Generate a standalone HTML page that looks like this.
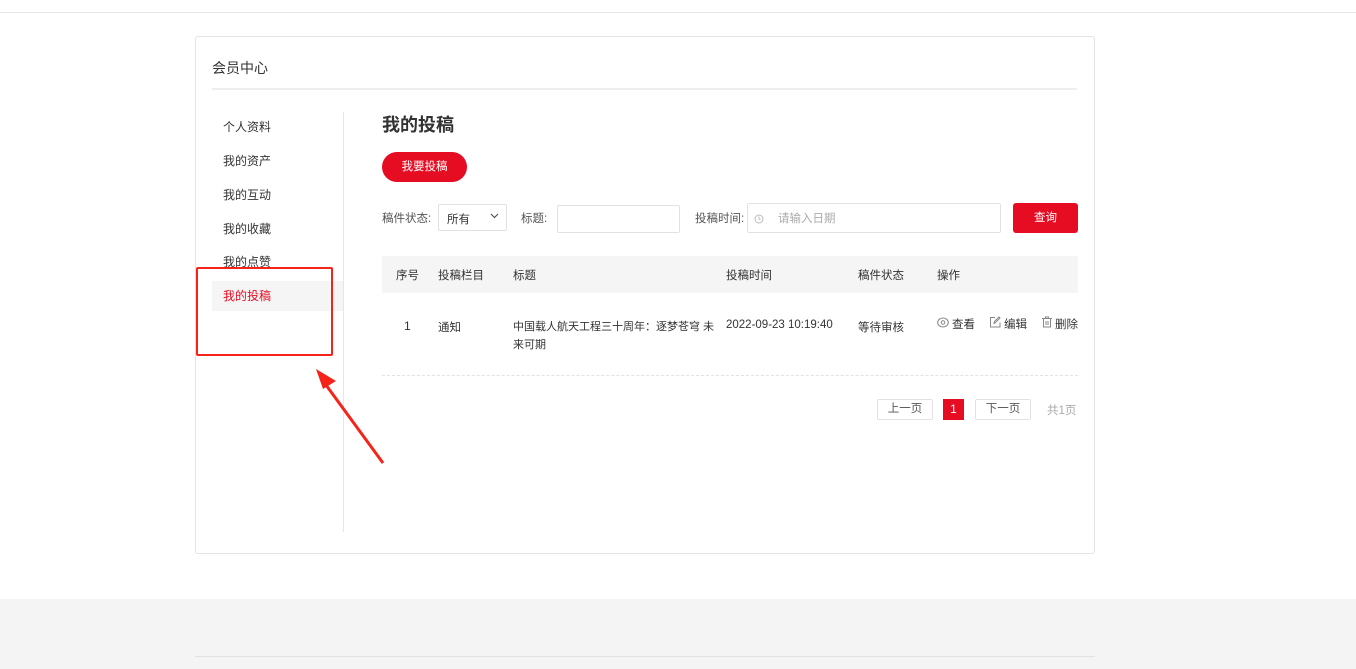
<!DOCTYPE html><html><head><meta charset="utf-8"><style>
*{margin:0;padding:0;box-sizing:border-box}
body{width:1356px;height:669px;position:relative;background:#fff;font-family:"Liberation Sans","Noto Sans CJK SC",sans-serif;font-size:12px;color:#333;overflow:hidden}
.a{position:absolute;white-space:nowrap}
.nav{left:223px;font-size:12px;color:#333;line-height:14px}
.th{top:267px;color:#333}
.box{border:1px solid #e2e2e2;border-radius:2px;background:#fff}
</style></head><body>
<div class="a" style="left:0;top:12px;width:1356px;height:1px;background:#e6e6e6"></div>
<div class="a" style="left:195px;top:36px;width:900px;height:518px;border:1px solid #e4e4e4;border-radius:3px"></div>
<div class="a" style="left:212px;top:58px;font-size:14px;color:#333">会员中心</div>
<div class="a" style="left:212px;top:88px;width:865px;height:2px;background:#eee"></div>
<div class="a" style="left:343px;top:112px;width:1px;height:420px;background:#e6e6e6"></div>
<div class="a" style="left:212px;top:281px;width:131px;height:30px;background:#f5f5f5"></div>
<div class="a nav" style="top:120px">个人资料</div>
<div class="a nav" style="top:154px">我的资产</div>
<div class="a nav" style="top:188px">我的互动</div>
<div class="a nav" style="top:222px">我的收藏</div>
<div class="a nav" style="top:255px">我的点赞</div>
<div class="a nav" style="top:289px;color:#e60c22">我的投稿</div>
<div class="a" style="left:382px;top:111px;font-size:18px;font-weight:bold;color:#333">我的投稿</div>
<div class="a" style="left:382px;top:152px;width:85px;height:30px;border-radius:15px;background:#e60c22;color:#fff;text-align:center;line-height:30px;font-size:11.5px">我要投稿</div>
<div class="a" style="left:382px;top:210px;color:#555;font-size:11.5px">稿件状态:</div>
<div class="a box" style="left:438px;top:204px;width:69px;height:27px"></div>
<div class="a" style="left:447px;top:211px;font-size:11.5px">所有</div>
<svg class="a" style="left:490px;top:213px" width="9" height="6"><path d="M1 1l3.5 3.5L8 1" fill="none" stroke="#555" stroke-width="1.2"/></svg>
<div class="a" style="left:521px;top:210px;color:#555;font-size:11.5px">标题:</div>
<div class="a box" style="left:557px;top:205px;width:123px;height:28px"></div>
<div class="a" style="left:695px;top:210px;color:#555;font-size:11.5px">投稿时间:</div>
<div class="a box" style="left:747px;top:203px;width:254px;height:30px"></div>
<svg class="a" style="left:754px;top:214px" width="10" height="10"><circle cx="5" cy="5" r="4" fill="none" stroke="#bbb"/><path d="M5 2.5V5l1.6 1" fill="none" stroke="#bbb"/></svg>
<div class="a" style="left:778px;top:210px;color:#aaa;font-size:11.5px">请输入日期</div>
<div class="a" style="left:1013px;top:203px;width:65px;height:30px;border-radius:3px;background:#e60c22;color:#fff;text-align:center;line-height:30px;font-size:11.5px">查询</div>
<div class="a" style="left:382px;top:256px;width:696px;height:37px;background:#f5f5f5"></div>
<div class="a th" style="left:396px;font-size:11.5px">序号</div>
<div class="a th" style="left:438px;font-size:11.5px">投稿栏目</div>
<div class="a th" style="left:513px;font-size:11.5px">标题</div>
<div class="a th" style="left:726px;font-size:11.5px">投稿时间</div>
<div class="a th" style="left:858px;font-size:11.5px">稿件状态</div>
<div class="a th" style="left:937px;font-size:11.5px">操作</div>
<div class="a" style="left:404px;top:319px">1</div>
<div class="a" style="left:438px;top:319px;font-size:11.5px">通知</div>
<div class="a" style="left:513px;top:318px;line-height:18px;font-size:11px">中国载人航天工程三十周年：逐梦苍穹 未<br>来可期</div>
<div class="a" style="left:726px;top:319px;font-size:11.5px">2022-09-23 10:19:40</div>
<div class="a" style="left:858px;top:319px;font-size:11.5px">等待审核</div>
<svg class="a" style="left:937px;top:317px" width="12" height="11"><ellipse cx="6" cy="5.5" rx="5.3" ry="4.5" fill="none" stroke="#888"/><circle cx="6" cy="5.5" r="1.8" fill="none" stroke="#888"/></svg>
<div class="a" style="left:952px;top:316px;font-size:11.5px">查看</div>
<svg class="a" style="left:989px;top:316px" width="12" height="12"><path d="M6 1.5H1.5v9.5h9.5V6.5" fill="none" stroke="#888"/><path d="M5 7.5l.4-2L10 1l1 1-4.6 4.6z" fill="none" stroke="#888"/></svg>
<div class="a" style="left:1004px;top:316px;font-size:11.5px">编辑</div>
<svg class="a" style="left:1041px;top:316px" width="12" height="12"><path d="M1 2.5h10M4.5 2.5V1h3v1.5M2.5 2.5V11h7V2.5M5 5v4M7 5v4" fill="none" stroke="#888"/></svg>
<div class="a" style="left:1055px;top:316px;font-size:11.5px">删除</div>
<div class="a" style="left:382px;top:375px;width:696px;border-top:1px dashed #e2e2e2"></div>
<div class="a box" style="left:877px;top:399px;width:56px;height:21px;text-align:center;line-height:19px;color:#555;font-size:11.5px">上一页</div>
<div class="a" style="left:943px;top:399px;width:21px;height:21px;background:#e60c22;color:#fff;text-align:center;line-height:21px">1</div>
<div class="a box" style="left:975px;top:399px;width:56px;height:21px;text-align:center;line-height:19px;color:#555;font-size:11.5px">下一页</div>
<div class="a" style="left:1047px;top:402px;color:#aaa;font-size:11.5px">共1页</div>
<div class="a" style="left:196px;top:267px;width:137px;height:89px;border:2px solid #f5231a;border-radius:2px"></div>
<svg class="a" style="left:300px;top:360px" width="100" height="110"><path d="M83 103L26 25" stroke="#f5231a" stroke-width="3"/><path d="M16 9l20 12-13 8z" fill="#f5231a"/></svg>
<div class="a" style="left:0;top:599px;width:1356px;height:70px;background:#f4f4f4"></div>
<div class="a" style="left:195px;top:656px;width:900px;height:1px;background:#e2e2e2"></div>
</body></html>
